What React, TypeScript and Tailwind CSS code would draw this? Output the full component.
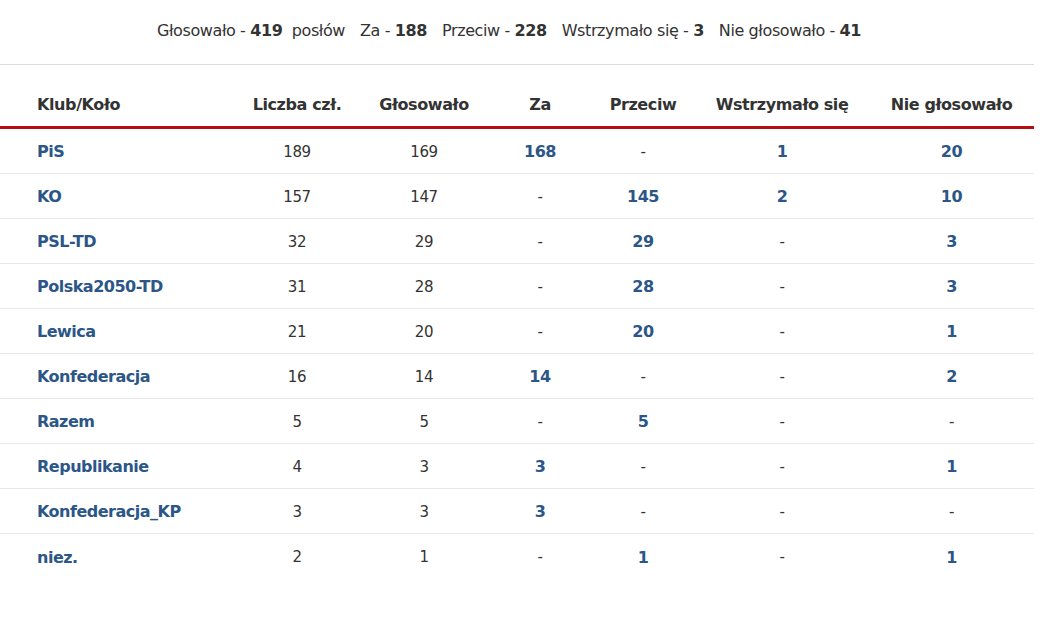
const rows = [
  { name: "PiS", members: 189, voted: 169, za: "168", przeciw: "-", wstrz: "1", nie: "20" },
  { name: "KO", members: 157, voted: 147, za: "-", przeciw: "145", wstrz: "2", nie: "10" },
  { name: "PSL-TD", members: 32, voted: 29, za: "-", przeciw: "29", wstrz: "-", nie: "3" },
  { name: "Polska2050-TD", members: 31, voted: 28, za: "-", przeciw: "28", wstrz: "-", nie: "3" },
  { name: "Lewica", members: 21, voted: 20, za: "-", przeciw: "20", wstrz: "-", nie: "1" },
  { name: "Konfederacja", members: 16, voted: 14, za: "14", przeciw: "-", wstrz: "-", nie: "2" },
  { name: "Razem", members: 5, voted: 5, za: "-", przeciw: "5", wstrz: "-", nie: "-" },
  { name: "Republikanie", members: 4, voted: 3, za: "3", przeciw: "-", wstrz: "-", nie: "1" },
  { name: "Konfederacja_KP", members: 3, voted: 3, za: "3", przeciw: "-", wstrz: "-", nie: "-" },
  { name: "niez.", members: 2, voted: 1, za: "-", przeciw: "1", wstrz: "-", nie: "1" },
]

const grid = "grid grid-cols-[235px_124px_130px_102px_104px_174px_1fr] items-center"

const Cell = ({ v }: { v: string }) =>
  v === "-" ? (
    <div className="text-center font-normal text-[#333]">-</div>
  ) : (
    <div className="text-center text-[16px] font-bold tracking-[-0.5px] text-[#2b5687]">{v}</div>
  )

export default function App() {
  return (
    <div className="w-[1034px] bg-white font-['DejaVu_Sans',sans-serif] text-[#333]">
      <div className="flex h-[65px] items-center justify-center gap-[15px] border-b border-[#dcdcdc] pb-[2px] pr-[16px] text-[16px] tracking-[-0.4px]">
        <span>
          Głosowało - <b>419</b>&nbsp; posłów
        </span>
        <span>
          Za - <b>188</b>
        </span>
        <span>
          Przeciw - <b>228</b>
        </span>
        <span>
          Wstrzymało się - <b>3</b>
        </span>
        <span>
          Nie głosowało - <b>41</b>
        </span>
      </div>

      <div className={`${grid} h-[64px] border-b-[3px] border-[#b70f0f] pt-[19px] text-[16px] font-bold tracking-[-0.4px]`}>
        <div className="pl-[37px]">Klub/Koło</div>
        <div className="text-center">Liczba czł.</div>
        <div className="text-center">Głosowało</div>
        <div className="text-center">Za</div>
        <div className="text-center">Przeciw</div>
        <div className="text-center">Wstrzymało się</div>
        <div className="text-center">Nie głosowało</div>
      </div>

      {rows.map((r, i) => (
        <div
          key={r.name}
          className={`${grid} h-[45px] pt-[2px] text-[15px] tracking-[-0.4px] ${i < rows.length - 1 ? "border-b border-[#e8e8e8]" : ""}`}
        >
          <div className="pl-[37px] text-[16px] font-bold tracking-[-0.5px] text-[#2b5687]">{r.name}</div>
          <div className="text-center">{r.members}</div>
          <div className="text-center">{r.voted}</div>
          <Cell v={r.za} />
          <Cell v={r.przeciw} />
          <Cell v={r.wstrz} />
          <Cell v={r.nie} />
        </div>
      ))}
    </div>
  )
}
